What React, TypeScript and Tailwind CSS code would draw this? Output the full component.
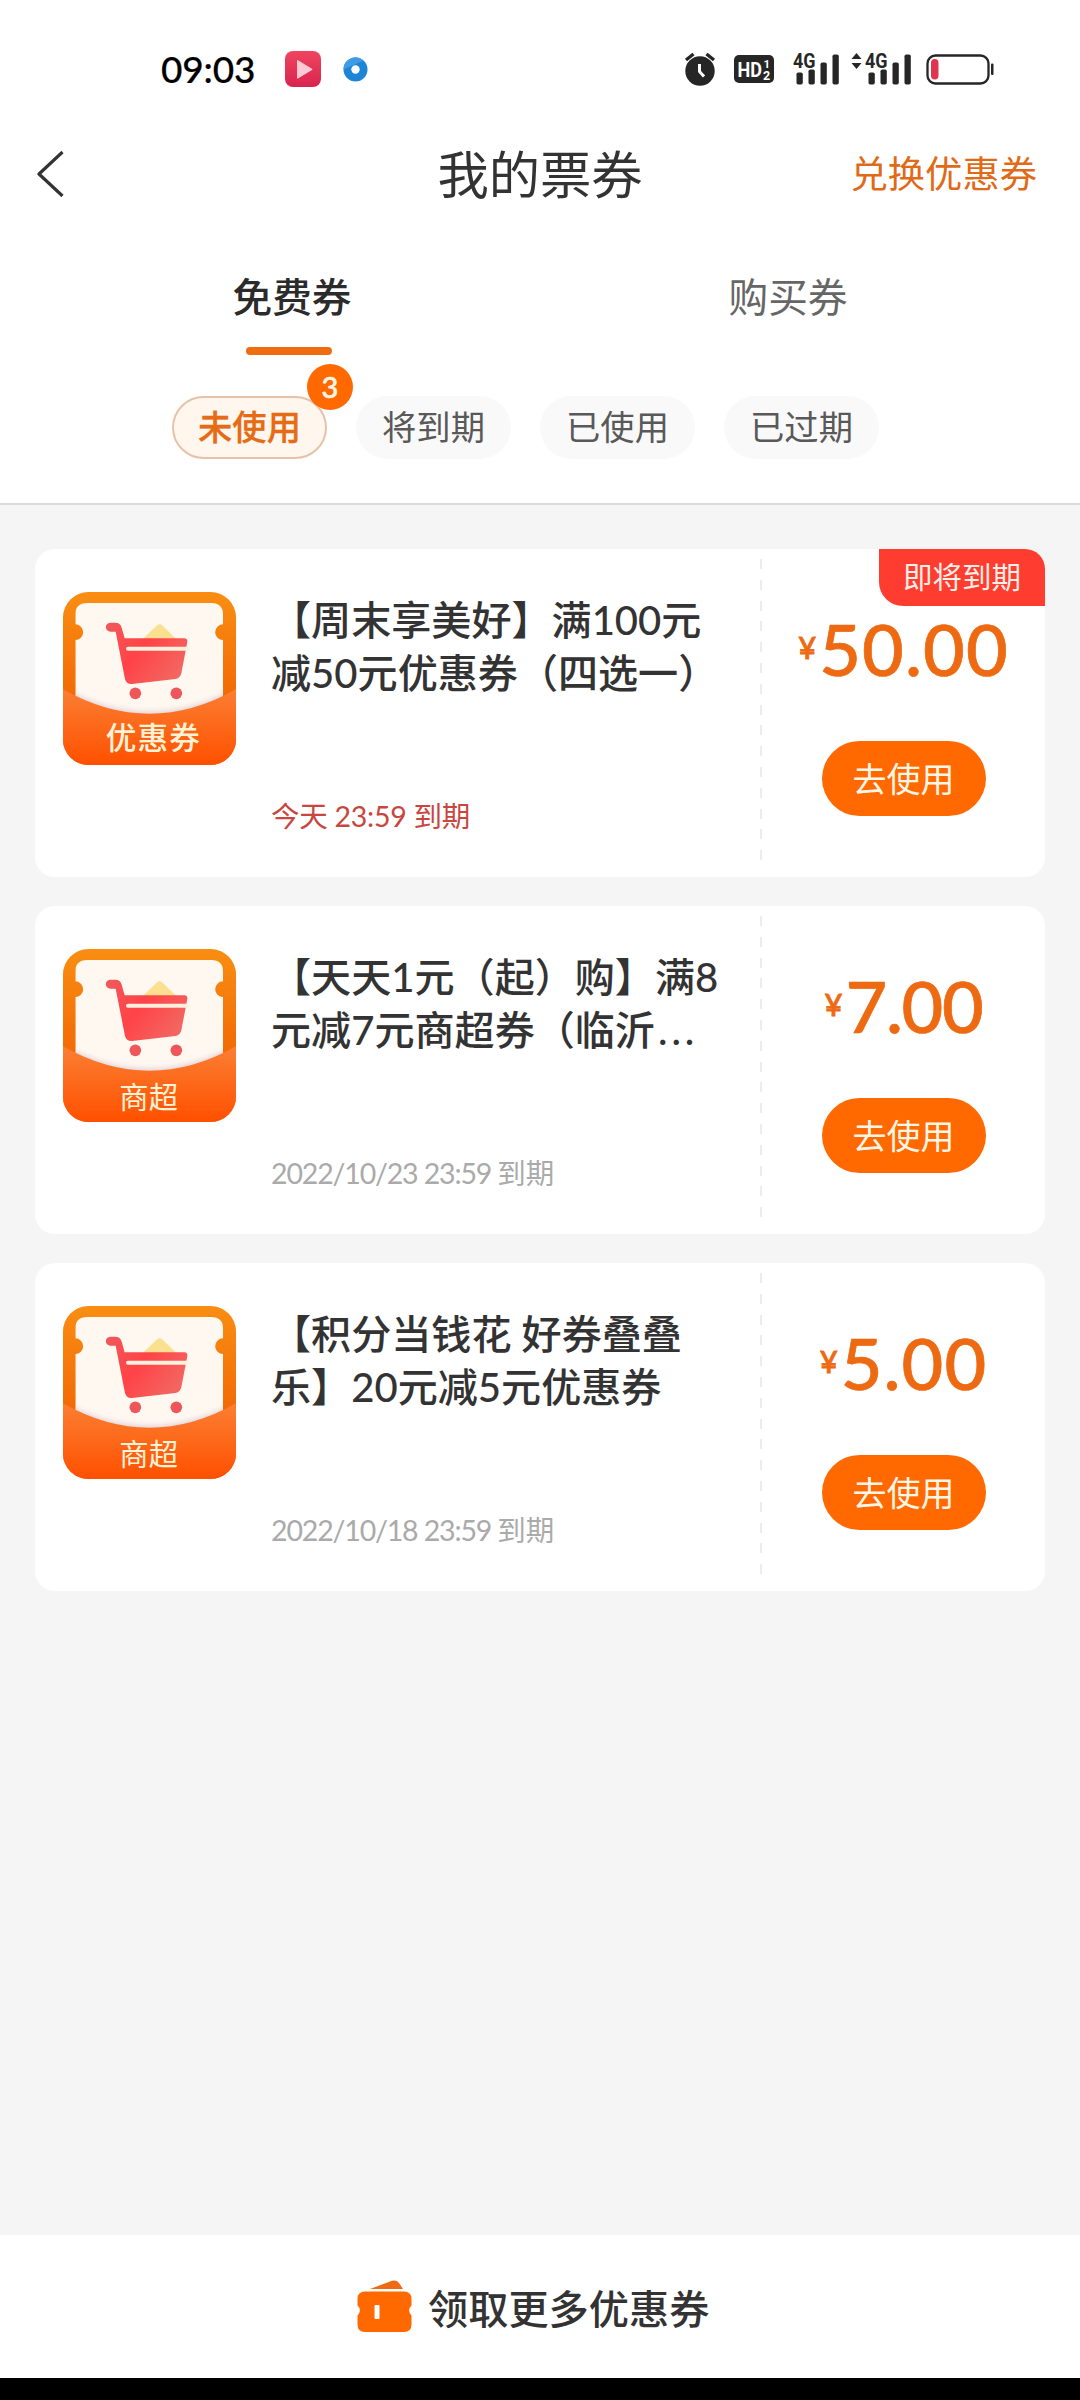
const latin = 'font-["Lato","Noto_Sans_CJK_SC",sans-serif]';

type Coupon = {
  tag: string;
  tagBig?: boolean;
  lines: [string, string];
  ellipsis?: boolean;
  expiry: string;
  urgent?: boolean;
  amount: string;
};

const coupons: Coupon[] = [
  {
    tag: '优惠券',
    tagBig: true,
    lines: ['【周末享美好】满100元', '减50元优惠券（四选一）'],
    expiry: '今天 23:59 到期',
    urgent: true,
    amount: '50.00',
  },
  {
    tag: '商超',
    lines: ['【天天1元（起）购】满8', '元减7元商超券（临沂'],
    ellipsis: true,
    expiry: '2022/10/23 23:59 到期',
    amount: '7.00',
  },
  {
    tag: '商超',
    lines: ['【积分当钱花 好券叠叠', '乐】20元减5元优惠券'],
    expiry: '2022/10/18 23:59 到期',
    amount: '5.00',
  },
];

function Signal() {
  return (
    <svg className="overflow-visible" width="47" height="34" viewBox="0 0 47 34" fill="#262626">
      <text x="0" y="15.5" fontSize="19.5" fontWeight="700" fontFamily="Roboto, sans-serif" textLength="22.5" lengthAdjust="spacingAndGlyphs">4G</text>
      <rect x="3.5" y="20.5" width="6.3" height="12" rx="1.8" />
      <rect x="15.5" y="17.5" width="6.3" height="15" rx="1.8" />
      <rect x="27.5" y="10.5" width="6.3" height="22" rx="1.8" />
      <rect x="39.5" y="2.5" width="6.3" height="30" rx="1.8" />
    </svg>
  );
}

function StatusBar() {
  return (
    <div className="flex h-[138px] items-center pl-[161px] pr-[86px]">
      <span className="w-[124px] pb-[2px] text-[37px] leading-none font-medium tracking-[-0.2px] text-black [-webkit-text-stroke:0.2px_#000]">09:03</span>
      <svg width="36" height="36" viewBox="0 0 36 36">
        <defs>
          <linearGradient id="play" x1="0" y1="0" x2="0" y2="1">
            <stop offset="0" stopColor="#ef4560" />
            <stop offset="1" stopColor="#d8244f" />
          </linearGradient>
        </defs>
        <rect width="36" height="36" rx="8" fill="url(#play)" />
        <path d="M12 9.5v17.5q0 1 1 .5l14-8.500q1-.7 0-1.300l-14-8.500q-1-.6-1 .300z" fill="#ffc9d3" />
      </svg>
      <svg className="ml-[22px]" width="25" height="25" viewBox="0 0 25 25">
        <circle cx="12.500" cy="12.500" r="12" fill="#1e84d6" />
        <path d="M.5 12.500a12 12 0 0 1 20-9z" fill="#3f9be4" />
        <circle cx="12.500" cy="12.500" r="4.200" fill="#fff" />
      </svg>
      <div className="ml-auto flex items-center">
        <svg width="32" height="34" viewBox="0 0 32 34">
          <circle cx="16" cy="19" r="14.700" fill="#262626" />
          <path d="M2 8l7.500-6M30 8l-7.500-6" stroke="#262626" strokeWidth="3.400" fill="none" />
          <path d="M15.500 12v7.500l4.500 5" stroke="#fff" strokeWidth="3" fill="none" />
        </svg>
        <svg className="ml-[18px]" width="40" height="28" viewBox="0 0 40 28">
          <rect width="40" height="28" rx="5" fill="#262626" />
          <g fill="#fff" fontFamily="Roboto, sans-serif" fontWeight="700">
            <text x="3.500" y="21.500" fontSize="20.500" textLength="24.500" lengthAdjust="spacingAndGlyphs">HD</text>
            <text x="29.500" y="12.500" fontSize="11.500">1</text>
            <text x="29" y="24.500" fontSize="12.500">2</text>
          </g>
        </svg>
        <div className="ml-[19px] flex">
          <Signal />
          <svg className="ml-[11px] mr-[3px] mt-px" width="11" height="17" viewBox="0 0 11 17" fill="#262626">
            <path d="M5.500 0l5 6H.5zM5.500 16l5-6H.5z" />
          </svg>
          <Signal />
        </div>
        <svg className="ml-[14px]" width="68" height="31" viewBox="0 0 68 31">
          <rect x="1.500" y="1.500" width="61" height="28" rx="8" fill="none" stroke="#262626" strokeWidth="2.300" />
          <rect x="5" y="5" width="7.500" height="20.500" rx="3.700" fill="#df3550" />
          <rect x="65" y="9.500" width="2.500" height="11.500" rx="1" fill="#262626" />
        </svg>
      </div>
    </div>
  );
}

function TicketIcon({ tag, big }: { tag: string; big?: boolean }) {
  return (
    <svg className="block h-[173px] w-[173px]" viewBox="69 66 519 519">
      <defs>
        <linearGradient id="back" x1="0" y1="0" x2="0" y2="1">
          <stop offset="0" stopColor="#f98e12" />
          <stop offset="0.600" stopColor="#f26a06" />
        </linearGradient>
        <linearGradient id="pocket" x1="0" y1="0" x2="0" y2="1">
          <stop offset="0" stopColor="#fb7f33" />
          <stop offset="1" stopColor="#ff5000" />
        </linearGradient>
        <linearGradient id="cart" x1="0" y1="0" x2="1" y2="0.600">
          <stop offset="0" stopColor="#f0595c" />
          <stop offset="0.500" stopColor="#ff4347" />
          <stop offset="1" stopColor="#f36560" />
        </linearGradient>
        <filter id="soft" x="-10%" y="-10%" width="120%" height="120%">
          <feGaussianBlur stdDeviation="9" />
        </filter>
        <clipPath id="frame">
          <rect x="69" y="66" width="519" height="519" rx="76" />
        </clipPath>
        <clipPath id="paper">
          <path d="M106 134q0-35 35-35H514q35 0 35 35v29a23.500 23.500 0 0 0 0 47V450H106V210a23.500 23.500 0 0 0 0-47z" />
        </clipPath>
      </defs>
      <g clipPath="url(#frame)">
        <rect x="69" y="66" width="519" height="519" fill="url(#back)" />
        <g clipPath="url(#paper)">
          <rect x="100" y="90" width="460" height="380" fill="#fff8f1" />
          <path d="M60 352Q328 505 598 352V480H60z" fill="#d9c4cc" filter="url(#soft)" />
        </g>
        <path d="M69 358Q328 505 588 358V585H69z" fill="url(#pocket)" />
      </g>
      <path d="M308 207L350 167q9-8 18 0L409 207z" fill="#fbe08f" />
      <path
        d="M210 158H226q15 0 19 15L254 205H433q10 0 9 11L424 310q-3 14-17 17L276 342q-17 1-21-15L227 185H212a13.500 13.500 0 0 1-2-27z"
        fill="url(#cart)"
      />
      <path d="M264 236.500H442" stroke="#fff0dd" strokeWidth="12" strokeLinecap="round" />
      <circle cx="286" cy="370" r="17.500" fill="#ee565a" />
      <circle cx="409" cy="370" r="17.500" fill="#ee565a" />
      <text
        x={big ? 340 : 326}
        y={big ? 537 : 544}
        textAnchor="middle"
        fontSize={big ? 92 : 88}
        letterSpacing={big ? 3 : 0}
        fontWeight={big ? 500 : 400}
        fill="#fff3d6"
        fontFamily="Noto Sans CJK SC, sans-serif"
      >
        {tag}
      </text>
    </svg>
  );
}

function CouponCard({ c }: { c: Coupon }) {
  return (
    <article className="relative flex h-[328px] rounded-[20px] bg-white">
      <div className="pl-[28px] pt-[43px]">
        <TicketIcon tag={c.tag} big={c.tagBig} />
      </div>
      <div className="flex w-[524px] flex-col pl-[35px] pt-[44px]">
        <h2 className="text-[40.1px] leading-[53px] font-medium whitespace-nowrap text-[#333]">
          <span className="block">{c.lines[0]}</span>
          <span className="block">
            {c.lines[1]}
            {c.ellipsis && <span className="ml-[3px] tracking-[4px]">...</span>}
          </span>
        </h2>
        <p className={c.urgent ? 'mt-[97px] text-[28.500px] leading-[40px] tracking-[-0.250px] whitespace-nowrap text-[#c9463f]' : 'mt-[97px] text-[28.500px] leading-[40px] tracking-[-1.150px] whitespace-nowrap text-[#aaa]'}>
          {c.urgent ? c.expiry : <>{c.expiry.slice(0, -2)}<span className="tracking-normal">{c.expiry.slice(-2)}</span></>}
        </p>
      </div>
      <div className="mt-[10px] mb-[10px] w-[2px] bg-[repeating-linear-gradient(to_bottom,#ececec_0_10px,transparent_10px_20.8px)]" />
      <div className="flex flex-1 flex-col items-center">
        <div className="mt-[63px] flex h-[72px] items-start text-[#ee6a12]">
          <span className="mr-[3px] mt-[15px] text-[31px] leading-[40px] font-medium [-webkit-text-stroke:0.8px_#ee6a12]">¥</span>
          <span
            className={
              c.amount === '7.00'
                ? 'text-[72px] leading-[72px] font-medium tracking-[-1.300px] [-webkit-text-stroke:0.700px_#ee6a12]'
                : 'text-[72px] leading-[72px] font-medium tracking-[1.100px] [-webkit-text-stroke:0.700px_#ee6a12]'
            }
          >
            {c.amount}
          </span>
        </div>
        <button className="mt-[57px] h-[75px] w-[164px] rounded-full bg-[#ff6900] text-[34px] leading-[72px] text-[#fff6e6]">去使用</button>
      </div>
      {c.urgent && (
        <span className="absolute top-0 right-0 h-[57px] w-[166px] rounded-tr-[20px] rounded-bl-[24px] bg-[#fe3c30] text-center text-[29.500px] leading-[55px] text-[#ffeee6]">
          即将到期
        </span>
      )}
    </article>
  );
}

export default function App() {
  return (
    <div className={`${latin} flex h-[2400px] w-[1080px] flex-col overflow-hidden bg-[#f5f5f5]`} lang="zh-CN">
      <header className="h-[505px] border-b-2 border-[#dadada] bg-white">
        <StatusBar />
        <div className="grid h-[72px] grid-cols-[1fr_auto_1fr] items-center pl-[36px] pr-[43px]">
          <svg width="28" height="46" viewBox="0 0 28 46" fill="none" stroke="#333" strokeWidth="3.200">
            <path d="M26.500 1L3 23L26.500 45" strokeLinejoin="round" />
          </svg>
          <h1 className="pl-[7px] text-[51.300px] leading-[72px] text-[#333]">我的票券</h1>
          <span className="text-right text-[37.300px] leading-[70px] text-[#e06a17]">兑换优惠券</span>
        </div>
        <nav className="mt-[58px] flex justify-center">
          <div className="flex w-[496px] flex-col items-center">
            <span className="text-[39.700px] leading-[58px] font-medium text-[#2b2b2b]">免费券</span>
            <span className="mr-[6px] mt-[21px] h-[8px] w-[86px] rounded-[4px] bg-[#f06c10]" />
          </div>
          <div className="flex w-[496px] flex-col items-center">
            <span className="text-[39.700px] leading-[58px] text-[#666]">购买券</span>
          </div>
        </nav>
        <div className="mt-[41px] flex gap-[29px] pl-[172px] text-[34.300px] leading-[62px] text-[#595959]">
          <span className="relative h-[63px] w-[155px] rounded-full border-2 border-[#e6c3a8] bg-[#fff6ee] text-center leading-[58px] font-medium text-[#e56b14] [-webkit-text-stroke:0.300px_#e56b14]">
            未使用
            <span className="absolute -top-[34px] left-[133px] h-[46px] w-[46px] rounded-full bg-[#ff6900] text-[29px] leading-[45px] font-medium text-[#fff6e6] [-webkit-text-stroke:0.600px_#fff6e6]">3</span>
          </span>
          <span className="h-[63px] w-[155px] rounded-full bg-[#f9f9f9] text-center">将到期</span>
          <span className="h-[63px] w-[155px] rounded-full bg-[#f9f9f9] text-center">已使用</span>
          <span className="h-[63px] w-[155px] rounded-full bg-[#f9f9f9] text-center">已过期</span>
        </div>
      </header>
      <main className="flex flex-1 flex-col gap-[29px] px-[35px] pt-[44px]">
        {coupons.map((c) => (
          <CouponCard key={c.amount} c={c} />
        ))}
      </main>
      <footer className="flex h-[143px] items-center bg-white pl-[357px]">
        <svg width="55" height="53" viewBox="0 0 55 53">
          <path d="M13 9L35 .8q5-1.500 7.500 3L46 9z" fill="#ee6a14" />
          <path d="M8 11.500H47q7.500 0 7.500 7.500v6.500a6.500 6.500 0 0 0 0 10v9q0 7.500-7.500 7.500H8Q.5 52 .5 44.500v-9a6.500 6.500 0 0 0 0-10V19q0-7.500 7.500-7.500z" fill="#ff6900" />
          <rect x="17.500" y="25" width="5" height="14" rx="1" fill="#fff" />
        </svg>
        <span className="ml-[16px] pt-[3px] text-[40.200px] leading-[143px] font-medium text-[#333]">领取更多优惠券</span>
      </footer>
      <div className="h-[22px] bg-black" />
    </div>
  );
}
